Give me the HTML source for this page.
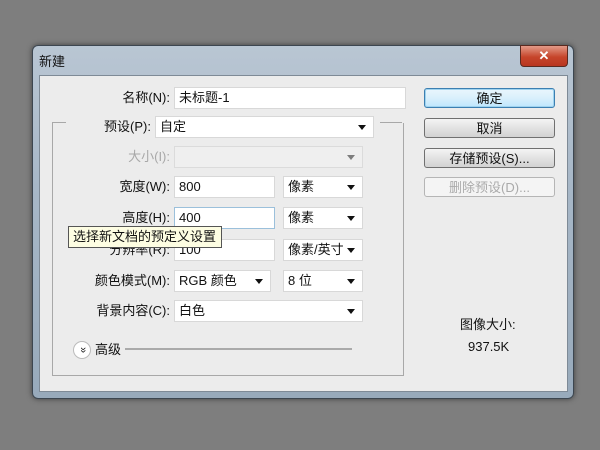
<!DOCTYPE html><html><head><style>
body{margin:0;width:600px;height:450px;background:#7e7e7e;position:relative;overflow:hidden;font-family:"Liberation Sans","Noto Sans CJK SC",sans-serif;font-size:13px;color:#111}
.a{position:absolute}
.win{left:32px;top:45px;width:540px;height:352px;border-radius:6px;background:linear-gradient(#b9c6d3,#a7b7c7 40%,#98aabb);border:1px solid #3c4650;box-shadow:0 0 6px rgba(0,0,0,.5)}
.in{left:39px;top:75px;width:527px;height:315px;background:#ececec;border:1px solid #7e8a96}
.f{background:#fff;border:1px solid #d8d8d8;height:20px;line-height:20px;padding-left:4px;box-sizing:border-box}
.lb{text-align:right;width:130px;line-height:20px}
.arr:after{content:"";position:absolute;right:7px;top:8px;border:4px solid transparent;border-top:5px solid #111}
.btn{left:424px;width:131px;height:20px;border:1px solid #707070;border-radius:3px;background:linear-gradient(#f4f4f4,#e2e2e2 50%,#d2d2d2);text-align:center;line-height:19px;box-sizing:border-box}
</style></head><body>
<div class="a win"></div>
<div class="a" style="left:39px;top:51px;font-size:13px">新建</div>
<div class="a" style="left:520px;top:45px;width:46px;height:20px;border-radius:0 0 4px 4px;background:linear-gradient(#e39a88,#c6452b 55%,#b8361f);border:1px solid #5a2a20;color:#fff;text-align:center;font-weight:bold;line-height:19px">✕</div>
<div class="a in"></div>
<div class="a" style="left:52px;top:123px;width:350px;height:252px;border:1px solid #a8a8a8;border-top:none"></div>
<div class="a" style="left:52px;top:122px;width:14px;border-top:1px solid #a8a8a8"></div>
<div class="a" style="left:380px;top:122px;width:22px;border-top:1px solid #a8a8a8"></div>

<div class="a lb" style="left:40px;top:88px">名称(N):</div><div class="a f" style="left:174px;top:87px;width:232px;height:22px">未标题-1</div>
<div class="a lb" style="left:21px;top:117px;width:130px">预设(P):</div><div class="a f arr" style="left:155px;top:116px;width:219px;height:22px">自定</div>
<div class="a lb" style="left:40px;top:147px;color:#a8a8a8">大小(I):</div><div class="a f arr" style="left:174px;top:146px;width:189px;height:22px;background:#f3f3f3;border-color:#ccc;opacity:.5"></div>
<div class="a lb" style="left:40px;top:177px">宽度(W):</div><div class="a f" style="left:174px;top:176px;width:101px;height:22px">800</div><div class="a f arr" style="left:283px;top:176px;width:80px;height:22px">像素</div>
<div class="a lb" style="left:40px;top:208px">高度(H):</div><div class="a f" style="left:174px;top:207px;width:101px;height:22px;border-color:#9bc0db">400</div><div class="a f arr" style="left:283px;top:207px;width:80px;height:22px">像素</div>
<div class="a lb" style="left:40px;top:240px">分辨率(R):</div><div class="a f" style="left:174px;top:239px;width:101px;height:22px">100</div><div class="a f arr" style="left:283px;top:239px;width:80px;height:22px">像素/英寸</div>
<div class="a" style="left:68px;top:226px;width:154px;height:22px;background:#fdfde2;border:1px solid #555;line-height:20px;padding-left:4px;box-sizing:border-box">选择新文档的预定义设置</div>
<div class="a lb" style="left:40px;top:271px">颜色模式(M):</div><div class="a f arr" style="left:174px;top:270px;width:97px;height:22px">RGB 颜色</div><div class="a f arr" style="left:283px;top:270px;width:80px;height:22px">8 位</div>
<div class="a lb" style="left:40px;top:301px">背景内容(C):</div><div class="a f arr" style="left:174px;top:300px;width:189px;height:22px">白色</div>
<div class="a" style="left:73px;top:341px;width:16px;height:16px;border-radius:50%;background:#fff;border:1px solid #bbb;font-size:11px;text-align:center;line-height:15px;transform:rotate(90deg)">»</div>
<div class="a" style="left:95px;top:340px;line-height:20px">高级</div>
<div class="a" style="left:125px;top:348px;width:227px;border-top:2px solid #aaa"></div>
<div class="a btn" style="top:88px;border-color:#3c7fb1;box-shadow:0 0 0 1px #9fd3ef inset;background:linear-gradient(#eaf6fd,#d9f0fc 50%,#bee6fd)">确定</div>
<div class="a btn" style="top:118px">取消</div>
<div class="a btn" style="top:148px">存储预设(S)...</div>
<div class="a btn" style="top:177px;color:#aaa;border-color:#b5b5b5;background:#f4f4f4">删除预设(D)...</div>
<div class="a" style="left:460px;top:314px">图像大小:</div>
<div class="a" style="left:468px;top:339px">937.5K</div>
</body></html>
